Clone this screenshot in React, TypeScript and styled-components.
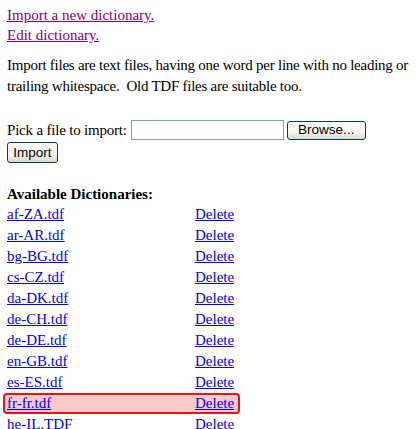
import React from 'react';
import styled, { createGlobalStyle } from 'styled-components';

const GlobalStyle = createGlobalStyle`
  html, body {
    margin: 0;
    padding: 0;
    background: #ffffff;
  }
  body {
    font-family: "Liberation Serif", "Times New Roman", serif;
    font-size: 15px;
    color: #000000;
  }
`;

const DICTIONARIES = [
  'af-ZA.tdf',
  'ar-AR.tdf',
  'bg-BG.tdf',
  'cs-CZ.tdf',
  'da-DK.tdf',
  'de-CH.tdf',
  'de-DE.tdf',
  'en-GB.tdf',
  'es-ES.tdf',
  'fr-fr.tdf',
  'he-IL.TDF',
];

const SELECTED = 'fr-fr.tdf';

function App() {
  return (
    <StyledRoot>
      <GlobalStyle />
      <NavLinks>
        <VisitedLink href="#">Import a new dictionary.</VisitedLink>
        <VisitedLink href="#">Edit dictionary.</VisitedLink>
      </NavLinks>

      <Intro>
        Import files are text files, having one word per line with no leading or
        trailing whitespace.&nbsp; Old TDF files are suitable too.
      </Intro>

      <ImportForm>
        <FileRow>
          <PickLabel>Pick a file to import:</PickLabel>
          <FileField type="text" readOnly />
          <XpButton type="button" $height={19} $width={79}>Browse...</XpButton>
        </FileRow>
        <div>
          <XpButton type="button" $height={21} $width={51}>Import</XpButton>
        </div>
      </ImportForm>

      <Heading>Available Dictionaries:</Heading>
      <DictList>
        {DICTIONARIES.map((name) => (
          <DictRow key={name} $selected={name === SELECTED}>
            <NameCell>
              <DictLink href="#">{name}</DictLink>
            </NameCell>
            <DictLink href="#">Delete</DictLink>
          </DictRow>
        ))}
      </DictList>
    </StyledRoot>
  );
}

const StyledRoot = styled.div`
  padding: 5px 0 0 7px;
`;

const NavLinks = styled.div`
  display: flex;
  flex-direction: column;
  align-items: flex-start;
  line-height: 20px;
`;

const VisitedLink = styled.a`
  color: #800080;
  text-decoration: underline;
`;

const Intro = styled.p`
  margin: 10px 0 0 0;
  line-height: 21px;
  letter-spacing: -0.25px;
`;

const ImportForm = styled.form`
  margin: 23px 0 0 0;
  display: flex;
  flex-direction: column;
  gap: 2px;
`;

const FileRow = styled.div`
  display: flex;
  align-items: center;
  height: 20px;
  gap: 3px;
`;

const PickLabel = styled.span`
  letter-spacing: -0.2px;
`;

const FileField = styled.input`
  box-sizing: border-box;
  width: 153px;
  height: 20px;
  margin: 0 0 0 1px;
  border: 1px solid #7f9db9;
  padding: 0 2px;
  background: #ffffff;
  font-family: "Liberation Sans", Arial, sans-serif;
  font-size: 13px;
  outline: none;
`;

const XpButton = styled.button<{ $height: number; $width: number }>`
  box-sizing: border-box;
  width: ${({ $width }) => $width}px;
  height: ${({ $height }) => $height}px;
  padding: 0;
  border: 1px solid #003c74;
  border-radius: 3px;
  background: linear-gradient(#ffffff 0%, #f5f4ef 60%, #dcd8c8 100%);
  font-family: "Liberation Sans", Arial, sans-serif;
  font-size: 13.5px;
  line-height: 16px;
  color: #000000;
  text-align: center;
  cursor: pointer;
`;

const Heading = styled.div`
  margin-top: 21px;
  font-weight: bold;
  line-height: 20px;
`;

const DictList = styled.div`
  display: flex;
  flex-direction: column;
  margin-left: -4px;
  width: 237px;
`;

const DictRow = styled.div<{ $selected: boolean }>`
  display: flex;
  align-items: center;
  box-sizing: border-box;
  height: 21px;
  padding: 0 2px;
  border: 2px solid ${({ $selected }) => ($selected ? '#e8141a' : 'transparent')};
  border-radius: 4px;
  background: ${({ $selected }) => ($selected ? '#f9caca' : 'transparent')};
`;

const NameCell = styled.div`
  width: 188px;
`;

const DictLink = styled.a`
  color: #0000ff;
  text-decoration: underline;
`;

export default App;
